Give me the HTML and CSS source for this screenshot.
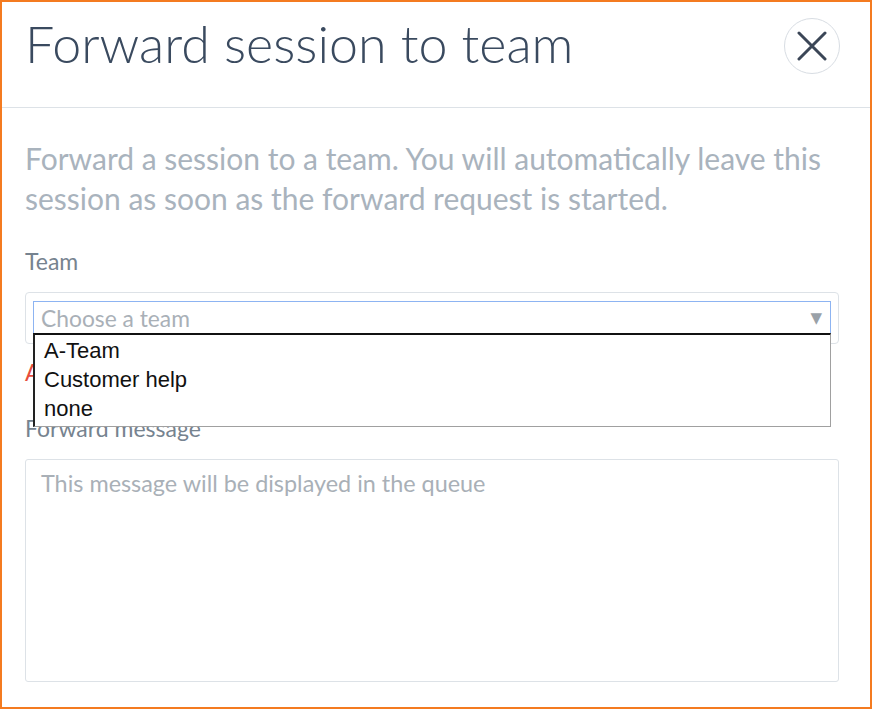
FILE: index.html
```html
<!DOCTYPE html>
<html>
<head>
<meta charset="utf-8">
<link rel="stylesheet" href="styles.css">
</head>
<body>
<div class="modal">
  <div class="header">
    <h1 class="title">Forward session to team</h1>
    <button class="close" aria-label="Close">
      <svg width="30" height="30" viewBox="0 0 30 30"><path d="M2 2 L28 28 M28 2 L2 28" stroke="#3b4657" stroke-width="3" stroke-linecap="round" fill="none"/></svg>
    </button>
  </div>
  <div class="body">
    <p class="desc">Forward a session to a team. You will automatically leave this session as soon as the forward request is started.</p>
    <div class="label">Team</div>
    <div class="select-wrap">
      <div class="select">
        <span class="placeholder">Choose a team</span>
        <span class="arrow">▼</span>
      </div>
      <ul class="options">
        <li>A-Team</li>
        <li>Customer help</li>
        <li>none</li>
      </ul>
    </div>
    <div class="error">A team is required</div>
    <div class="label label-msg">Forward message</div>
    <div class="textarea">This message will be displayed in the queue</div>
  </div>
</div>
</body>
</html>
```
FILE: styles.css
```css
html, body {
  margin: 0;
  padding: 0;
  background: #fff;
}
.modal {
  box-sizing: border-box;
  width: 872px;
  height: 709px;
  border: 2px solid #f47b20;
  font-family: "Lato", "Open Sans", sans-serif;
  overflow: hidden;
}
.header {
  display: flex;
  align-items: center;
  justify-content: space-between;
  height: 106px;
  padding: 0 30px 0 23px;
  border-bottom: 1px solid #dde2e7;
  box-sizing: border-box;
}
.title {
  margin: 0;
  font-weight: 300;
  font-size: 52px;
  color: #3a4a5f;
  line-height: 1;
  margin-top: -23px;
}
.close {
  width: 56px;
  height: 56px;
  border-radius: 50%;
  border: 1px solid #d8dde3;
  background: #fff;
  display: flex;
  align-items: center;
  justify-content: center;
  padding: 0;
  margin-top: -18px;
}
.body {
  padding: 30px 31px 0 23px;
}
.desc {
  margin: 0;
  font-size: 30px;
  line-height: 40px;
  color: #a9b3bd;
}
.label {
  margin-top: 30px;
  font-size: 23px;
  color: #76838f;
  line-height: 26px;
}
.select-wrap {
  position: relative;
  margin-top: 18px;
  border: 1px solid #dde2e7;
  border-radius: 4px;
  padding: 8px 7px 8px;
}
.select {
  display: flex;
  align-items: center;
  justify-content: space-between;
  height: 34px;
  box-sizing: border-box;
  border: 1px solid #8db4f2;
  padding: 0 8px 0 7px;
}
.placeholder {
  font-size: 22.8px;
  color: #a9b0b7;
}
.arrow {
  font-size: 15px;
  color: #9aa1a8;
  font-family: "DejaVu Sans", sans-serif;
}
.options {
  position: absolute;
  left: 7px;
  right: 7px;
  top: 40px;
  margin: 0;
  padding: 1px 0 3px 9px;
  list-style: none;
  background: #fff;
  border-top: 2px solid #111;
  border-left: 2px solid #222;
  border-right: 1px solid #a0a0a0;
  border-bottom: 1px solid #a0a0a0;
  font-family: "Liberation Sans", Arial, sans-serif;
  font-size: 22px;
  color: #111;
}
.options li {
  height: 29px;
  line-height: 29px;
}
.error {
  margin-top: 15px;
  font-size: 23px;
  color: #e74c3c;
  line-height: 26px;
}
.label-msg {
  margin-top: 30px;
}
.textarea {
  margin-top: 18px;
  height: 223px;
  box-sizing: border-box;
  border: 1px solid #dde2e7;
  border-radius: 3px;
  padding: 9px 15px;
  font-size: 23.4px;
  color: #a9b0b7;
}
```
